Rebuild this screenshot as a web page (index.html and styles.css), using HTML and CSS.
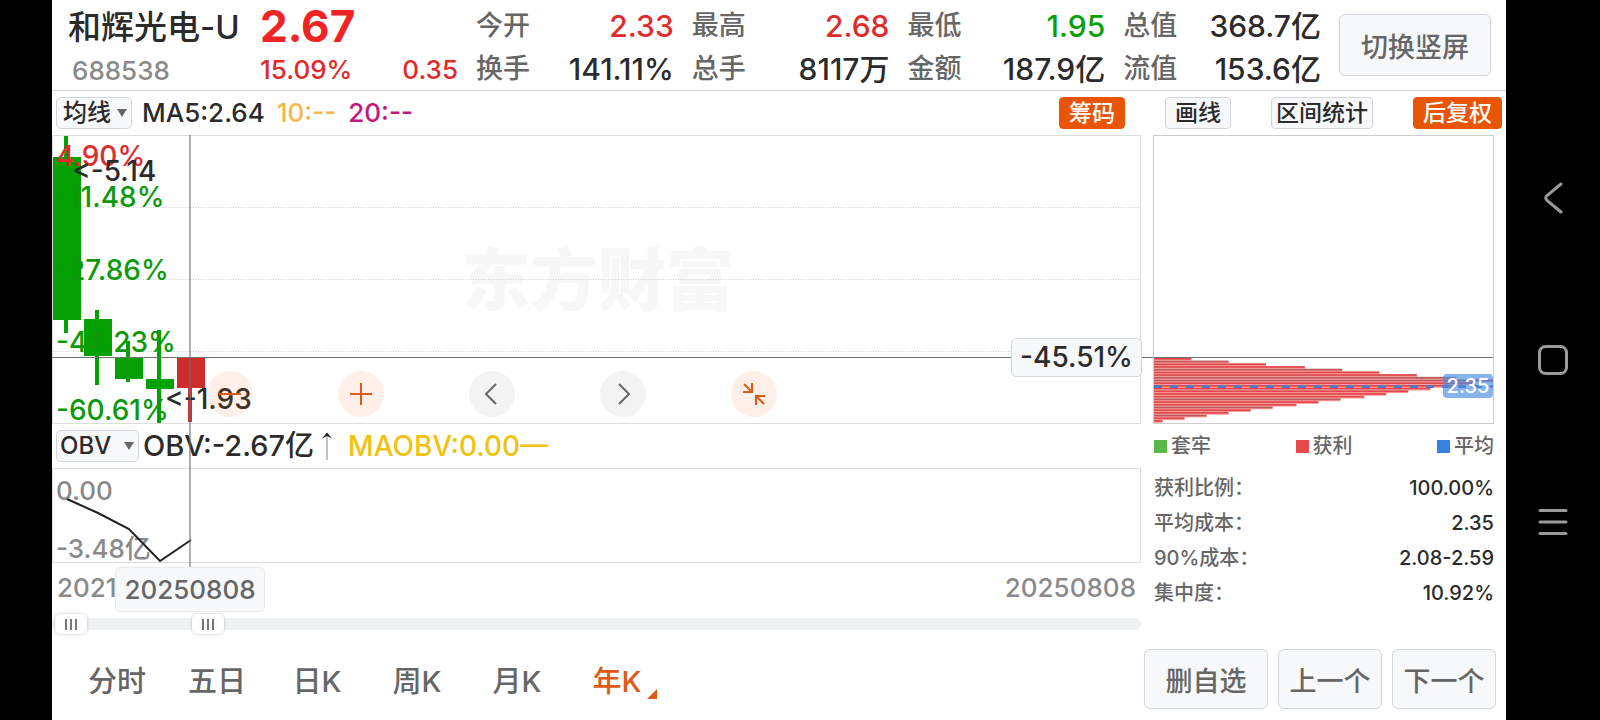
FILE: index.html
```html
<!DOCTYPE html>
<html lang="zh-CN">
<head>
<meta charset="utf-8">
<title>和辉光电-U 688538</title>
<link rel="stylesheet" href="styles.css">
</head>
<body>
<main class="app">
  <header class="quote">
    <div class="ident">
      <h1 class="name">和辉光电-U</h1>
      <div class="code">688538</div>
    </div>
    <div class="last">
      <div class="price">2.67</div>
      <div class="change"><span>15.09%</span><span>0.35</span></div>
    </div>
    <dl class="stats">
      <div class="stat"><dt>今开</dt><dd class="up">2.33</dd></div>
      <div class="stat"><dt>最高</dt><dd class="up">2.68</dd></div>
      <div class="stat"><dt>最低</dt><dd class="down">1.95</dd></div>
      <div class="stat"><dt>总值</dt><dd>368.7亿</dd></div>
      <div class="stat"><dt>换手</dt><dd>141.11%</dd></div>
      <div class="stat"><dt>总手</dt><dd>8117万</dd></div>
      <div class="stat"><dt>金额</dt><dd>187.9亿</dd></div>
      <div class="stat"><dt>流值</dt><dd>153.6亿</dd></div>
    </dl>
    <button class="btn rotate" type="button">切换竖屏</button>
  </header>

  <div class="toolbar">
    <div class="picker">
      <select class="select" aria-label="主图指标"><option>均线</option></select>
    </div>
    <div class="ma">
      <span>MA5:2.64</span><span class="ma10">10:--</span><span class="ma20">20:--</span>
    </div>
    <div class="tools">
      <button class="chip on" type="button">筹码</button>
      <button class="chip" type="button">画线</button>
      <button class="chip range" type="button">区间统计</button>
      <button class="chip on" type="button">后复权</button>
    </div>
  </div>

  <div class="board">
    <section class="charts">
      <div class="kline">
        <div class="watermark">东方财富</div>
        <svg class="layer" aria-hidden="true">
          <g stroke="#cfcfcf" stroke-dasharray="1 1.5">
            <line x1="0" x2="100%" y1="71.5" y2="71.5"/>
            <line x1="0" x2="100%" y1="143.5" y2="143.5"/>
            <line x1="0" x2="100%" y1="215.5" y2="215.5"/>
          </g>
          <g fill="#04a004">
            <rect x="11" y="0" width="4" height="197"/><rect x="0" y="21" width="28" height="163"/>
            <rect x="42" y="174" width="4" height="75"/><rect x="31" y="183" width="28" height="37"/>
            <rect x="73" y="205" width="4" height="41"/><rect x="62" y="221" width="28" height="22"/>
            <rect x="104" y="194" width="4" height="94"/><rect x="93" y="243" width="28" height="10"/>
          </g>
          <g fill="#cf2d2d">
            <rect x="135" y="221" width="4" height="65"/><rect x="124" y="222" width="28" height="30"/>
          </g>
        </svg>
        <span class="pct p1">4.90%</span>
        <span class="pct p2">-11.48%</span>
        <span class="pct p3">-27.86%</span>
        <span class="pct p4">-44.23%</span>
        <span class="pct p5">-60.61%</span>
        <span class="mark high">&lt;-5.14</span>
        <span class="mark low">&lt;-1.93</span>
        <div class="controls">
          <button class="round warm" type="button" aria-label="缩小"><svg viewBox="0 0 46 46"><path d="M12 23h22"/></svg></button>
          <button class="round warm" type="button" aria-label="放大"><svg viewBox="0 0 46 46"><path d="M12 23h22M23 12v22"/></svg></button>
          <button class="round" type="button" aria-label="左移"><svg viewBox="0 0 46 46"><path d="M27 13L17 23l10 10"/></svg></button>
          <button class="round" type="button" aria-label="右移"><svg viewBox="0 0 46 46"><path d="M19 13l10 10-10 10"/></svg></button>
          <button class="round warm" type="button" aria-label="收起"><svg viewBox="0 0 46 46"><path d="M13 13l8 8M12 21h9v-9M33 33l-8-8M34 25h-9v9"/></svg></button>
        </div>
      </div>

      <div class="obvbar">
        <div class="picker">
          <select class="select wide" aria-label="副图指标"><option>OBV</option></select>
        </div>
        <span class="obvval">OBV:-2.67亿</span>
        <svg class="rise" viewBox="0 0 10 28" aria-hidden="true"><path d="M5 2v26" stroke="#888"/><path d="M0 6.500l5-6 5 6-5-2.500z" fill="#222"/></svg>
        <span class="maobv">MAOBV:0.00—</span>
      </div>

      <div class="obv">
        <span class="axis axis-max">0.00</span>
        <span class="axis axis-min">-3.48亿</span>
        <svg class="layer" aria-hidden="true">
          <polyline points="14,30 45,44 76,60 107,92 138,71" fill="none" stroke="#222" stroke-width="2"/>
        </svg>
      </div>

      <div class="dates"><span>2021</span><span>20250808</span></div>

      <div class="window">
        <input class="slide" type="range" min="0" max="1000" value="0" aria-label="起始日期">
        <input class="slide" type="range" min="0" max="1000" value="130" aria-label="结束日期">
      </div>

      <div class="cross-x"></div>
      <div class="cross-y"></div>
      <div class="tag">-45.51%</div>
      <div class="datetag">20250808</div>
    </section>

    <aside class="side">
      <div class="chips">
        <svg class="layer" id="cost" aria-hidden="true"></svg>
        <div class="avgline"></div>
        <div class="avg">2.35</div>
      </div>
      <ul class="legend">
        <li class="trapped">套牢</li>
        <li class="profit">获利</li>
        <li class="mean">平均</li>
      </ul>
      <dl class="facts">
        <div><dt>获利比例：</dt><dd>100.00%</dd></div>
        <div><dt>平均成本：</dt><dd>2.35</dd></div>
        <div><dt>90%成本：</dt><dd>2.08-2.59</dd></div>
        <div><dt>集中度：</dt><dd>10.92%</dd></div>
      </dl>
    </aside>
  </div>

  <footer class="bottom">
    <nav class="tabs">
      <button class="tab" type="button">分时</button>
      <button class="tab" type="button">五日</button>
      <button class="tab" type="button">日K</button>
      <button class="tab" type="button">周K</button>
      <button class="tab" type="button">月K</button>
      <button class="tab active" type="button">年K</button>
    </nav>
    <div class="actions">
      <button class="btn remove" type="button">删自选</button>
      <button class="btn" type="button">上一个</button>
      <button class="btn" type="button">下一个</button>
    </div>
  </footer>
</main>

<nav class="sysbar" aria-label="系统导航">
  <button class="sys" type="button" aria-label="返回"><svg viewBox="0 0 32 32"><path d="M24 2L10 13.500q-2.500 2.500 0 5L24 30"/></svg></button>
  <button class="sys" type="button" aria-label="主屏幕"><svg viewBox="0 0 32 32"><rect x="2.500" y="2.500" width="27" height="27" rx="6"/></svg></button>
  <button class="sys" type="button" aria-label="菜单"><svg viewBox="0 0 32 32"><path d="M3 4.500h26M3 16h26M3 27.500h26"/></svg></button>
</nav>
<script src="chart.js"></script>
</body>
</html>
```

FILE: styles.css
```css
* { box-sizing: border-box; }

body {
  margin: 0;
  min-height: 100vh;
  display: flex;
  background: #000;
  color: #2b2b2b;
  font-family: Inter, "Noto Sans CJK SC", sans-serif;
  font-weight: 500;
}

h1, dl, dd, ul { margin: 0; padding: 0; font: inherit; }
ul { list-style: none; }
button, select { font: inherit; color: inherit; padding: 0; margin: 0; }

.app {
  flex: 1;
  min-width: 0;
  margin-left: 52px;
  background: #fff;
  display: flex;
  flex-direction: column;
}

/* quote header */
.quote {
  display: flex;
  height: 91px;
  padding: 5px 15px 0 16px;
  border-bottom: 1px solid #d6d6d6;
}
.ident { width: 192px; }
.name { font-size: 33px; line-height: 44px; white-space: nowrap; }
.code { font-size: 26px; line-height: 44px; padding-left: 4px; color: #8a8a8a; }
.last { width: 198px; color: #e12b2b; }
.price { font-size: 44px; line-height: 42px; font-weight: 700; color: #f02424; }
.change { display: flex; justify-content: space-between; font-size: 26px; line-height: 46px; }
.stats {
  flex: 1;
  display: grid;
  grid-template-columns: repeat(4, 1fr);
  column-gap: 18px;
  padding-left: 18px;
}
.stat { display: flex; justify-content: space-between; font-size: 30px; line-height: 42px; }
.stat dt { font-size: 27px; color: #666; }
.stat .up { color: #e12b2b; }
.stat .down { color: #08a008; }

.btn {
  width: 104px;
  height: 60px;
  font-size: 27px;
  color: #666;
  background: #f7f8fa;
  border: 1px solid #d3d7dd;
  border-radius: 6px;
}
.rotate { width: 152px; height: 62px; margin: 9px 0 0 18px; }

/* indicator toolbar */
.toolbar { display: flex; align-items: center; height: 44px; padding: 0 4px; }
.picker { position: relative; }
.picker::after {
  content: "";
  position: absolute;
  right: 5px;
  top: 12px;
  border: 5px solid transparent;
  border-top: 8px solid #666;
  border-bottom: 0;
  pointer-events: none;
}
.select {
  appearance: none;
  display: block;
  width: 76px;
  height: 32px;
  padding-left: 6px;
  font-size: 24px;
  line-height: 28px;
  background: #f7f8fa;
  border: 1px solid #d3d7dd;
  border-radius: 5px;
}
.select.wide { width: 83px; padding-left: 3px; }
.ma { display: flex; gap: 12px; margin-left: 10px; font-size: 26px; line-height: 40px; }
.ma10 { color: #f2b94b; }
.ma20 { color: #c4157d; }
.tools { display: flex; gap: 40px; margin-left: auto; }
.chip {
  height: 32px;
  padding: 0 9px;
  font-size: 23px;
  line-height: 30px;
  background: #f7f8fa;
  border: 1px solid #d3d7dd;
  border-radius: 4px;
}
.chip.on { color: #fff; background: #e95506; border-color: #e95506; }
.chip.range { padding: 0 4px; }

/* chart board */
.board {
  display: grid;
  grid-template-columns: minmax(0, 1fr) 341px;
  column-gap: 12px;
  padding-right: 12px;
}
.charts { position: relative; }
.layer { position: absolute; inset: 0; width: 100%; height: 100%; }
.kline { position: relative; height: 289px; border: 1px solid #ddd; }
.watermark {
  position: absolute;
  left: 409px;
  top: 94px;
  font-size: 68px;
  line-height: 100px;
  font-weight: 900;
  color: #f7f7f7;
}
.pct, .mark { position: absolute; font-size: 28px; line-height: 32px; }
.pct { left: 3px; color: #0c9a0c; }
.pct.p1 { color: #e12b2b; }
.p1 { top: 4px; }
.p2 { top: 45px; }
.p3 { top: 118px; }
.p4 { top: 190px; }
.p5 { top: 258px; }
.high { left: 19px; top: 19px; }
.low { left: 112px; top: 247px; }
.controls { position: absolute; left: 154px; bottom: 6px; display: flex; gap: 85px; }
.round {
  width: 46px;
  height: 46px;
  border: 0;
  border-radius: 50%;
  background: rgba(200, 200, 200, 0.22);
}
.round svg { display: block; fill: none; stroke: #666; stroke-width: 2; }
.round.warm { background: rgba(250, 120, 50, 0.11); }
.round.warm svg { stroke: #e05a14; }

.obvbar { display: flex; align-items: center; height: 44px; padding-left: 4px; font-size: 29px; line-height: 42px; }
.obvval { margin-left: 4px; }
.rise { width: 10px; height: 28px; margin: 0 16px 0 8px; }
.maobv { font-size: 28px; color: #f0c30f; }
.obv { position: relative; height: 95px; border: 1px solid #ddd; }
.axis { position: absolute; left: 3px; font-size: 26px; line-height: 32px; color: #8a8a8a; }
.axis-max { top: 6px; }
.axis-min { bottom: -3px; }
.dates {
  display: flex;
  justify-content: space-between;
  padding: 4px 5px 0;
  height: 51px;
  font-size: 26px;
  line-height: 42px;
  color: #8a8a8a;
}

.window { position: relative; height: 20px; }
.window::before {
  content: "";
  position: absolute;
  inset: 4px 0;
  border-radius: 6px;
  background: #f0f1f4;
}
.slide {
  appearance: none;
  position: absolute;
  left: 3px;
  width: calc(100% - 3px);
  height: 20px;
  margin: 0;
  background: none;
  pointer-events: none;
}
.slide::-webkit-slider-thumb {
  appearance: none;
  pointer-events: auto;
  width: 32px;
  height: 20px;
  border-radius: 5px;
  box-shadow: 0 0 3px rgba(0, 0, 0, 0.25);
  background:
    linear-gradient(90deg, #777 2px, transparent 2px 5px, #777 5px 7px, transparent 7px 10px, #777 10px) center / 12px 11px no-repeat,
    #fff;
}

.cross-x { position: absolute; left: 137px; top: 0; width: 2px; height: 432px; background: rgba(110, 110, 110, 0.55); }
.cross-y { position: absolute; left: 0; right: -353px; top: 222px; height: 1px; background: #707070; }
.tag, .datetag { position: absolute; background: #f7f8fa; border: 1px solid #d3d7dd; border-radius: 5px; text-align: center; }
.tag { right: -1px; top: 203px; width: 131px; font-size: 28px; line-height: 37px; }
.datetag { left: 63px; top: 432px; width: 150px; font-size: 26px; line-height: 43px; color: #666; border-color: #e9ebee; }

/* cost distribution */
.chips { position: relative; height: 289px; border: 1px solid #ccc; }
.avgline {
  position: absolute;
  left: 0;
  right: 0;
  top: 249px;
  height: 3px;
  background: repeating-linear-gradient(90deg, #5a76bc 0 8px, transparent 8px 16px);
}
.avg {
  position: absolute;
  right: 0;
  top: 238px;
  width: 50px;
  border-radius: 4px;
  font-size: 20px;
  line-height: 24px;
  text-align: center;
  color: #fff;
  background: rgba(72, 140, 228, 0.66);
}
.legend { display: flex; justify-content: space-between; padding: 7px 0 0 1px; font-size: 20px; line-height: 30px; color: #666; }
.legend li { display: flex; align-items: center; gap: 4px; }
.legend li::before { content: ""; width: 13px; height: 13px; background: #5ab946; }
.legend .profit::before { background: #e84a4a; }
.legend .mean::before { background: #3482e4; }
.facts { padding: 10px 0 0 1px; font-size: 20px; line-height: 35px; }
.facts div { display: flex; justify-content: space-between; }
.facts dt { color: #666; }

/* period tabs */
.bottom { display: flex; align-items: center; justify-content: space-between; flex: 1; padding: 4px 10px 0 15px; }
.tabs { display: flex; }
.tab { position: relative; width: 100px; height: 60px; font-size: 29px; background: none; border: 0; color: #666; }
.tab.active { color: #e05a14; }
.tab.active::after {
  content: "";
  position: absolute;
  right: 10px;
  bottom: 10px;
  border-left: 10px solid transparent;
  border-bottom: 10px solid #e05a14;
}
.actions { display: flex; gap: 10px; }
.remove { width: 124px; }

/* system navigation */
.sysbar { width: 94px; display: flex; flex-direction: column; align-items: center; justify-content: center; gap: 130px; }
.sys { width: 32px; height: 32px; background: none; border: 0; }
.sys svg { display: block; fill: none; stroke: #9a9a9a; stroke-width: 3; stroke-linecap: round; }
```

FILE: chart.js
```javascript
// Share of holdings at each price level, as a percentage of the widest level.
const levels = [11, 22, 33, 44.5, 55.5, 66.5, 77.5, 89, 100, 95, 88, 81.5, 75, 68.5, 62,
  55, 48.5, 42, 35, 28.5, 22, 15.5, 9, 2.5];
const dim = new Set([1, 4, 7, 8, 15, 18, 21]);
const pitch = 2.7;
const svg = document.getElementById("cost");
const ns = "http://www.w3.org/2000/svg";

function bar(y, width, height, fill) {
  const rect = document.createElementNS(ns, "rect");
  rect.setAttribute("y", y);
  rect.setAttribute("width", width + "%");
  rect.setAttribute("height", height);
  rect.setAttribute("fill", fill);
  svg.appendChild(rect);
}

levels.forEach((width, i) => {
  const y = 222 + i * pitch;
  bar(y, width, pitch, "#ff9a9a");
  bar(y, width, 1.7, dim.has(i) ? "#b85a5c" : "#e04a4d");
});
```
